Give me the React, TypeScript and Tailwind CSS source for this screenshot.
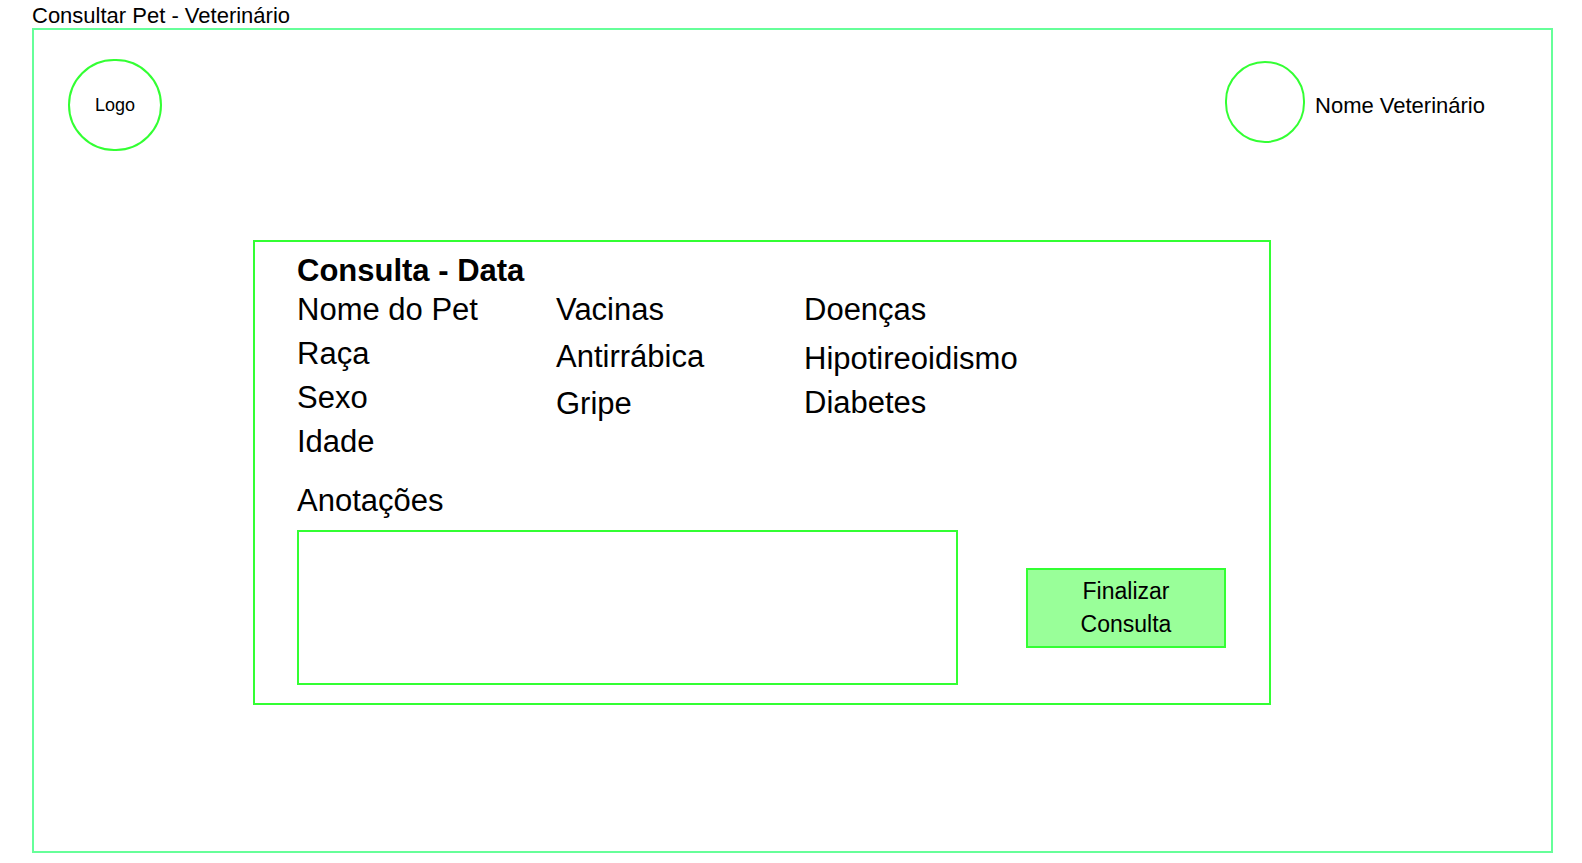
type Column = { title: string; items: string[]; className: string };

const columns: Column[] = [
  { title: "Nome do Pet", items: ["Raça", "Sexo", "Idade"], className: "lg:w-[259px]" },
  { title: "Vacinas", items: ["Antirrábica", "Gripe"], className: "gap-[3px] lg:w-[248px]" },
  { title: "Doenças", items: ["Hipotireoidismo", "Diabetes"], className: "[&>h3]:mb-[5px]" },
];

function Header() {
  return (
    <header className="flex items-start justify-between pt-[29px] pr-[66px] pl-[34px]">
      <div className="flex h-[92px] w-[94px] items-center justify-center rounded-full border-2 border-[#33ff33] text-[18px]">
        Logo
      </div>
      <div className="flex items-center gap-2.5 pt-0.5">
        <div className="h-[82px] w-20 shrink-0 rounded-full border-2 border-[#33ff33]" />
        <span className="pt-2 text-[22px] leading-7">Nome Veterinário</span>
      </div>
    </header>
  );
}

function InfoColumn({ title, items, className }: Column) {
  return (
    <div className={`flex flex-col ${className}`}>
      <h3>{title}</h3>
      <ul className="contents">
        {items.map((item) => (
          <li key={item}>{item}</li>
        ))}
      </ul>
    </div>
  );
}

function ConsultationCard() {
  return (
    <section className="border-2 border-[#33ff33] pt-[11px] pr-[43px] pb-[18px] pl-[42px] text-[31px] leading-[44px]">
      <h2 className="leading-[35px] font-bold">Consulta - Data</h2>
      <div className="flex flex-wrap">
        {columns.map((column) => (
          <InfoColumn key={column.title} {...column} />
        ))}
      </div>
      <label htmlFor="anotacoes" className="mt-[15px] block">
        Anotações
      </label>
      <div className="mt-[7px] flex flex-wrap items-center gap-x-[68px] gap-y-4">
        <textarea
          id="anotacoes"
          className="block h-[155px] min-w-0 flex-1 resize-none border-2 border-[#33ff33] p-2 text-[22px] leading-7 outline-none"
        />
        <button
          type="button"
          className="h-20 w-[200px] border-2 border-[#33ff33] bg-[#99ff99] px-10 text-[23px] leading-[33px]"
        >
          Finalizar Consulta
        </button>
      </div>
    </section>
  );
}

export default function App() {
  return (
    <div className="flex min-h-screen flex-col bg-white pr-[29px] pb-2.5 pl-8 font-['Liberation_Sans',Arial,sans-serif] text-black">
      <h1 className="pt-[3px] text-[22px] leading-[25px]">Consultar Pet - Veterinário</h1>
      <div className="flex-1 border-2 border-[#66ff99]">
        <Header />
        <main className="px-6 pt-[89px] pb-6 lg:pr-[280px] lg:pl-[219px]">
          <ConsultationCard />
        </main>
      </div>
    </div>
  );
}
